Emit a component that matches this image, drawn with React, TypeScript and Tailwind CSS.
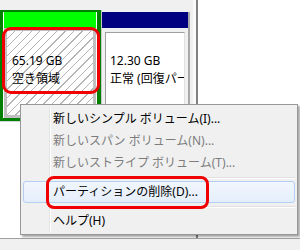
import React from "react"

const menuItems = [
  { label: "新しいシンプル ボリューム(I)...", disabled: false },
  { label: "新しいスパン ボリューム(N)...", disabled: true },
  { label: "新しいストライプ ボリューム(T)...", disabled: true },
  { sep: true },
  { label: "パーティションの削除(D)...", active: true },
  { sep: true },
  { label: "ヘルプ(H)" },
]

export default function App() {
  return (
    <div className="relative w-[300px] h-[250px] overflow-hidden bg-white font-['Noto_Sans','Noto_Sans_CJK_JP',sans-serif] text-[12px] text-black">
      <div className="flex h-[238px]">
        <div className="w-[193px] flex flex-col bg-white">
          <div className="h-[10px] bg-[#f0f0f0]" />
          <div className="flex h-[112px] bg-[#f0f0f0] border-b border-[#d4d4d4]">
            {/* unallocated partition, selected */}
            <div className="w-[101px] flex flex-col border-t-2 border-l-[3px] border-r-[4px] border-b-[3px] border-[#008000] bg-white px-px">
              <div className="h-[16px] bg-[#00ff00]" />
              <div className="flex-1 border-[3px] border-[#c0c0c0] bg-[repeating-linear-gradient(135deg,#ffffff_0px,#ffffff_5px,#b4b4b4_5px,#b4b4b4_6px)] pl-[5px] pt-[21px] leading-[18px]">
                <div>65.19 GB</div>
                <div>空き領域</div>
              </div>
            </div>
            {/* recovery partition */}
            <div className="w-[89px] flex flex-col bg-[#f0f0f0] border-l border-[#c8c8c8] pt-[2px] pb-[3px]">
              <div className="flex flex-col flex-1 border-r-2 border-[#a8a8a8]">
                <div className="h-[16px] bg-[#000080]" />
                <div className="flex-1 px-[3px] pt-[4px] pb-[3px]">
                  <div className="h-full overflow-hidden whitespace-nowrap bg-white border-t border-l border-[#a0a0a0] border-r border-b border-r-[#e0e0e0] border-b-[#e0e0e0] pl-[4px] pt-[19px] leading-[18px]">
                    <div>12.30 GB</div>
                    <div>正常 (回復パーティション)</div>
                  </div>
                </div>
              </div>
            </div>
          </div>
          <div className="flex-1 bg-white" />
        </div>
        <div className="w-[3px] bg-[#fafafa]" />
        <div className="w-[2px] bg-[#828282]" />
        <div className="flex-1 bg-white" />
      </div>
      <div className="h-[12px] bg-[#f0f0f0] border-t border-[#a0a0a0]" />

      {/* context menu */}
      <div className="absolute left-[20px] top-[104px] w-[278px] h-[131px] bg-[#f0f0f0] border border-[#979797] shadow-[2px_2px_2px_rgba(0,0,0,0.35)] px-[2px] pt-[3px] pb-[2px]">
        <div className="absolute left-[28px] top-[2px] bottom-[2px] w-[2px] border-l border-[#e2e3e3] border-r border-r-white" />
        {menuItems.map((item, i) =>
          item.sep ? (
            <div key={i} className="relative h-[7px] flex items-center pl-[27px]">
              <div className="flex-1 border-t border-[#e0e0e0] border-b border-b-white" />
            </div>
          ) : item.active ? (
            <div
              key={i}
              className="relative h-[22px] leading-[20px] pl-[29px] rounded-[3px] border border-[#b3cff2] bg-[linear-gradient(#f1f6fd,#e4eefb)] whitespace-nowrap"
            >
              {item.label}
            </div>
          ) : (
            <div
              key={i}
              className={
                "relative h-[22px] leading-[22px] pl-[30px] whitespace-nowrap " +
                (item.disabled ? "text-[#7d7d7d]" : "text-black")
              }
            >
              {item.label}
            </div>
          )
        )}
      </div>

      {/* red annotation frames */}
      <div className="absolute left-[2px] top-[27px] w-[98px] h-[67px] border-[3px] border-[#f00000] rounded-[9px]" />
      <div className="absolute left-[46px] top-[176px] w-[163px] h-[33px] border-[3px] border-[#f00000] rounded-[8px]" />
    </div>
  )
}
